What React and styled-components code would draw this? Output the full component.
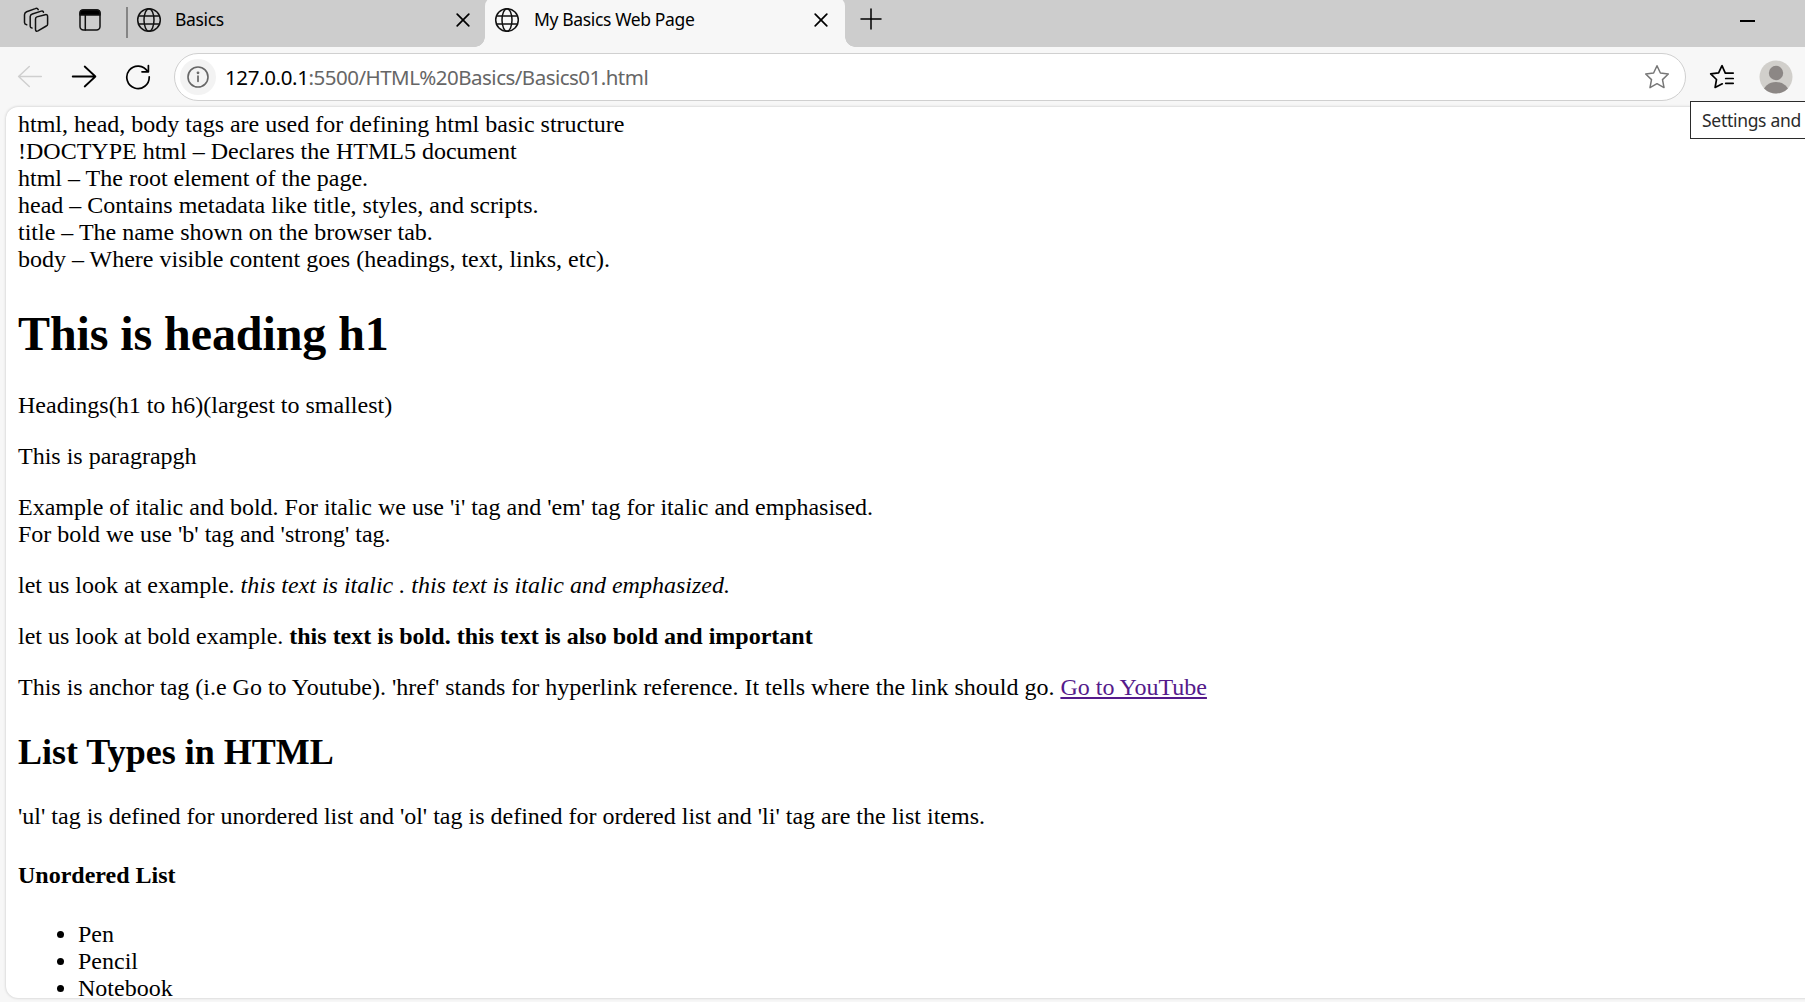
import React from 'react';
import styled, { createGlobalStyle, css } from 'styled-components';

const Global = createGlobalStyle`
  * { box-sizing: border-box; }
  body { margin: 0; background: #f7f7f7; overflow: hidden; }
`;

const Browser = styled.div`
  display: flex;
  flex-direction: column;
  width: 1805px;
  height: 1002px;
  overflow: hidden;
  background: #f7f7f7;
  font-family: "Noto Sans", "Open Sans", sans-serif;
  color: #000;
`;

const TabBar = styled.header`
  display: flex;
  flex: none;
  height: 47px;
  background: #cdcdcd;
`;

const TabTools = styled.div`
  display: flex;
  align-items: center;
  width: 128px;
  padding: 0 0 7px 23px;
  gap: 29px;
`;

const Divider = styled.span`
  width: 2px;
  height: 31px;
  margin-left: -5px;
  margin-top: 5px;
  background: #858585;
`;

const foot = css`
  content: '';
  position: absolute;
  bottom: 0;
  width: 10px;
  height: 10px;
`;

const Tab = styled.div`
  position: relative;
  display: flex;
  align-items: center;
  width: ${(p) => p.$width}px;
  padding: 0 15px 7px 8px;
  ${(p) => p.$active && css`
    margin-top: -3px;
    padding: 3px 17px 7px 9px;
    border-radius: 9px 9px 0 0;
    background: #f7f7f7;
    &::before {
      ${foot}
      left: -10px;
      background: radial-gradient(circle at 0 0, transparent 9.5px, #f7f7f7 10px);
    }
    &::after {
      ${foot}
      right: -10px;
      background: radial-gradient(circle at 100% 0, transparent 9.5px, #f7f7f7 10px);
    }
  `}
`;

const TabTitle = styled.span`
  flex: 1;
  margin: 0 0 2px ${(p) => p.$gap}px;
  font-size: 17.5px;
  line-height: 24px;
  letter-spacing: -0.36px;
  white-space: nowrap;
`;

const NewTab = styled.div`
  flex: 1;
  padding: 8px 0 0 15px;
`;

const Minimize = styled.span`
  width: 15px;
  height: 2px;
  margin: 20px 50px 0 0;
  background: #000;
`;

const Toolbar = styled.div`
  position: relative;
  display: flex;
  align-items: center;
  flex: none;
  height: 60px;
  padding-left: 17px;
`;

const NavButtons = styled.div`
  display: flex;
  align-items: center;
  gap: 28px;
  width: 157px;
`;

const AddressBar = styled.div`
  display: flex;
  align-items: center;
  width: 1512px;
  height: 48px;
  padding: 0 15px 0 5px;
  border: 1.5px solid #d0d0d0;
  border-radius: 24px;
  background: #fff;
`;

const InfoBadge = styled.span`
  display: flex;
  align-items: center;
  justify-content: center;
  width: 36px;
  height: 36px;
  border-radius: 50%;
  background: #f3f3f3;
`;

const Url = styled.span`
  flex: 1;
  margin-left: 9px;
  font-size: 20.5px;
  line-height: 28px;
  letter-spacing: -0.52px;
  color: #666;
`;

const Host = styled.span`
  letter-spacing: -0.36px;
  color: #000;
`;

const ToolbarActions = styled.div`
  display: flex;
  align-items: center;
  gap: 24px;
  margin-left: 23px;
`;

const Tooltip = styled.div`
  position: absolute;
  top: 54px;
  left: 1690px;
  z-index: 2;
  width: 140px;
  height: 38px;
  padding-left: 11px;
  border: 1px solid #2b2b2b;
  background: #fff;
  font-size: 17.5px;
  line-height: 36px;
  letter-spacing: -0.3px;
  color: #2b2b2b;
  white-space: nowrap;
`;

const Viewport = styled.main`
  width: 1820px;
  height: 891px;
  margin-left: 6px;
  padding: 4px 12px 0;
  overflow: hidden;
  border-radius: 12px;
  background: #fff;
  box-shadow: 0 0 3px rgba(0, 0, 0, 0.22);
  font: 24px/27px "Liberation Serif", "Times New Roman", serif;
`;

const Paragraph = styled.p`
  margin: 24px 0;
`;

const Intro = styled.div``;

const Heading1 = styled.h1`
  margin: 33px 0 31px;
  font-size: 48px;
  line-height: 55px;
  letter-spacing: -0.08px;
`;

const Heading2 = styled.h2`
  margin: 30px 0;
  font-size: 36px;
  line-height: 42px;
`;

const Heading4 = styled.h4`
  margin: 32px 0;
  font-size: 24px;
`;

const List = styled.ul`
  margin: 0;
  padding-left: 60px;
`;

const Link = styled.a`
  color: #551a8b;
  text-decoration: underline;
`;

const Glyph = styled.svg`
  display: block;
  flex: none;
  fill: none;
  stroke: ${(p) => p.$color || '#111'};
  stroke-width: ${(p) => p.$weight || 1.5};
  stroke-linecap: round;
  stroke-linejoin: round;
`;

const Icon = ({ w = 26, h = w, color, weight, children }) => (
  <Glyph width={w} height={h} viewBox={`0 0 ${w} ${h}`} $color={color} $weight={weight}>
    {children}
  </Glyph>
);

const Workspaces = () => (
  <Icon w={26}>
    <path d="M13.9 9.9 L22.2 7.7 Q24.6 7.2 24.6 9.5 V17.2 Q24.6 18.6 23.3 19 L15 23.9 Q12.5 24.9 12.5 22.3 V12 Q12.5 10.3 13.9 9.9Z" />
    <path d="M20.5 5.3 Q20 3.6 18.3 4.1 L9.3 7 Q7.2 7.7 7.2 9.6 V19.3 Q7.2 20.9 9 21.1" />
    <path d="M15.2 2.6 Q14.3 .7 12.3 1.6 L3.6 4.8 Q1.5 5.7 1.5 7.8 V15.6 Q1.5 17.3 3.7 17.8" />
  </Icon>
);

const TabPanel = () => (
  <Icon w={24}>
    <rect x="2" y="2" width="20" height="20" rx="3.5" />
    <path d="M2 7 V5 Q2 2 5 2 H19 Q22 2 22 5 V7Z" fill="#000" />
    <path d="M7.3 7 V22" />
  </Icon>
);

const Globe = () => (
  <Icon w={26}>
    <circle cx="13" cy="13" r="11.3" />
    <ellipse cx="13" cy="13" rx="5" ry="11.3" />
    <path d="M2.5 9 H23.5 M2.5 17 H23.5" />
  </Icon>
);

const Close = () => (
  <Icon w={14} weight={1.7} color="#000">
    <path d="M1.2 1.2 L12.8 12.8 M12.8 1.2 L1.2 12.8" />
  </Icon>
);

const Plus = () => (
  <Icon w={22} color="#000">
    <path d="M11 1 V21 M1 11 H21" />
  </Icon>
);

const Back = () => (
  <Icon w={26} color="#cfcfcf">
    <path d="M24.3 12.5 H1.6 M12.3 2.5 L1.6 12.5 L12.3 22.5" />
  </Icon>
);

const Forward = () => (
  <Icon w={26} color="#000" weight={1.8}>
    <path d="M1.7 12.5 H24.4 M13.7 2.5 L24.4 12.5 L13.7 22.5" />
  </Icon>
);

const Reload = () => (
  <Icon w={26} color="#000" weight={1.7}>
    <path d="M22.6 7.5 A11.2 11.2 0 1 0 24.2 12.8 M23.4 1.5 V7.8 H17" />
  </Icon>
);

const Info = () => (
  <Icon w={22} color="#666" weight={1.6}>
    <circle cx="11" cy="11" r="10" />
    <path d="M11 10 V15.3" strokeWidth="1.7" />
    <circle cx="11" cy="6.8" r=".6" fill="#666" />
  </Icon>
);

const Star = () => (
  <Icon w={26} color="#777" weight={1.5}>
    <path d="M13 1.7 L16.4 9 L24.3 10 L18.5 15.6 L20 23.6 L13 19.7 L6 23.6 L7.5 15.6 L1.7 10 L9.6 9Z" />
  </Icon>
);

const Favorites = () => (
  <Icon w={26} color="#000" weight={1.7}>
    <path d="M24.2 9.1 H16.3 L13 1.7 L9.6 8.8 L1.7 9.9 L7.5 15.5 L6.1 23.5 L13.3 19.8 M16.7 14.5 H24.2 M16.7 19.3 H24.2" />
  </Icon>
);

const Avatar = () => (
  <Glyph width="34" height="34" viewBox="0 0 34 34">
    <clipPath id="avatar-disc"><circle cx="17" cy="17" r="16.5" /></clipPath>
    <g clipPath="url(#avatar-disc)" stroke="none">
      <rect width="34" height="34" fill="#d1cfcb" />
      <circle cx="17" cy="13" r="7.2" fill="#8c8785" />
      <ellipse cx="17" cy="33" rx="13" ry="11" fill="#8c8785" />
    </g>
  </Glyph>
);

export default function App() {
  return (
    <Browser>
      <Global />
      <TabBar>
        <TabTools>
          <Workspaces />
          <TabPanel />
          <Divider />
        </TabTools>
        <Tab $width={357}>
          <Globe />
          <TabTitle $gap={13}>Basics</TabTitle>
          <Close />
        </Tab>
        <Tab $active $width={360}>
          <Globe />
          <TabTitle $gap={14}>My Basics Web Page</TabTitle>
          <Close />
        </Tab>
        <NewTab><Plus /></NewTab>
        <Minimize />
      </TabBar>
      <Toolbar>
        <NavButtons>
          <Back />
          <Forward />
          <Reload />
        </NavButtons>
        <AddressBar>
          <InfoBadge><Info /></InfoBadge>
          <Url><Host>127.0.0.1</Host>:5500/HTML%20Basics/Basics01.html</Url>
          <Star />
        </AddressBar>
        <ToolbarActions>
          <Favorites />
          <Avatar />
        </ToolbarActions>
        <Tooltip>Settings and</Tooltip>
      </Toolbar>
      <Viewport>
        <Intro>
          html, head, body tags are used for defining html basic structure<br />
          !DOCTYPE html – Declares the HTML5 document<br />
          html – The root element of the page.<br />
          head – Contains metadata like title, styles, and scripts.<br />
          title – The name shown on the browser tab.<br />
          body – Where visible content goes (headings, text, links, etc).
        </Intro>
        <Heading1>This is heading h1</Heading1>
        <Paragraph>Headings(h1 to h6)(largest to smallest)</Paragraph>
        <Paragraph>This is paragrapgh</Paragraph>
        <Paragraph>
          Example of italic and bold. For italic we use 'i' tag and 'em' tag for italic and emphasised.<br />
          For bold we use 'b' tag and 'strong' tag.
        </Paragraph>
        <Paragraph>
          let us look at example. <i>this text is italic .</i> <em>this text is italic and emphasized.</em>
        </Paragraph>
        <Paragraph>
          let us look at bold example. <b>this text is bold.</b> <strong>this text is also bold and important</strong>
        </Paragraph>
        <Paragraph>
          This is anchor tag (i.e Go to Youtube). 'href' stands for hyperlink reference. It tells where the link should go. <Link>Go to YouTube</Link>
        </Paragraph>
        <Heading2>List Types in HTML</Heading2>
        <Paragraph>
          'ul' tag is defined for unordered list and 'ol' tag is defined for ordered list and 'li' tag are the list items.
        </Paragraph>
        <Heading4>Unordered List</Heading4>
        <List>
          <li>Pen</li>
          <li>Pencil</li>
          <li>Notebook</li>
        </List>
      </Viewport>
    </Browser>
  );
}
